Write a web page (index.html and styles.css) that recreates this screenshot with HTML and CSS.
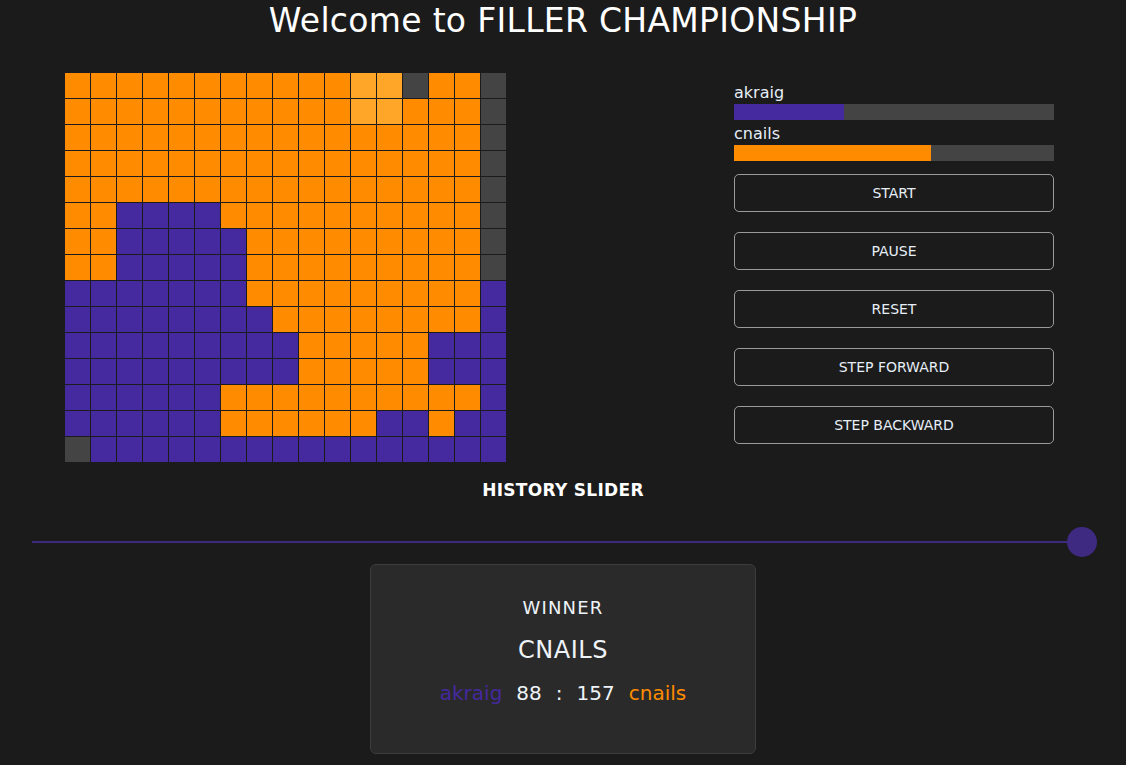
FILE: index.html
```html
<!DOCTYPE html>
<html lang="en">
<head>
<meta charset="utf-8">
<title>Filler Championship</title>
<link rel="stylesheet" href="styles.css">
</head>
<body>
<h1 class="title">Welcome to FILLER CHAMPIONSHIP</h1>
<main class="main">
  <div class="board" id="board"></div>
  <aside class="controls">
    <div class="player">
      <div class="player-name">akraig</div>
      <div class="bar"><div class="bar-fill fill-p1" style="width:34.5%"></div></div>
    </div>
    <div class="player">
      <div class="player-name">cnails</div>
      <div class="bar"><div class="bar-fill fill-p2" style="width:61.6%"></div></div>
    </div>
    <div class="buttons">
      <button class="btn">START</button>
      <button class="btn">PAUSE</button>
      <button class="btn">RESET</button>
      <button class="btn">STEP FORWARD</button>
      <button class="btn">STEP BACKWARD</button>
    </div>
  </aside>
</main>
<div class="history">HISTORY SLIDER</div>
<div class="slider-wrap">
  <input class="slider" type="range" min="0" max="100" value="100">
</div>
<section class="winner">
  <div class="winner-label">WINNER</div>
  <div class="winner-name">CNAILS</div>
  <div class="score">
    <span class="p1">akraig</span>
    <span>88</span>
    <span>:</span>
    <span>157</span>
    <span class="p2">cnails</span>
  </div>
</section>
<script>
  var rows = [
    "OOOOOOOOOOOLLGOOG",
    "OOOOOOOOOOOLLOOOG",
    "OOOOOOOOOOOOOOOOG",
    "OOOOOOOOOOOOOOOOG",
    "OOOOOOOOOOOOOOOOG",
    "OOPPPPOOOOOOOOOOG",
    "OOPPPPPOOOOOOOOOG",
    "OOPPPPPOOOOOOOOOG",
    "PPPPPPPOOOOOOOOOP",
    "PPPPPPPPOOOOOOOOP",
    "PPPPPPPPPOOOOOPPP",
    "PPPPPPPPPOOOOOPPP",
    "PPPPPPOOOOOOOOOOP",
    "PPPPPPOOOOOOPPOPP",
    "GPPPPPPPPPPPPPPPP"
  ];
  var map = {O: "c-o", L: "c-l", G: "c-g", P: "c-p"};
  var board = document.getElementById("board");
  rows.forEach(function (r) {
    for (var i = 0; i < r.length; i++) {
      var d = document.createElement("div");
      d.className = "cell " + map[r[i]];
      board.appendChild(d);
    }
  });
</script>
</body>
</html>
```

FILE: styles.css
```css
* { box-sizing: border-box; }

body {
  margin: 0;
  background: #1b1b1b;
  color: #eef3f8;
  font-family: "DejaVu Sans", "Open Sans", sans-serif;
}

.title {
  margin: 0;
  padding-top: 1px;
  text-align: center;
  font-size: 33px;
  font-weight: 400;
  letter-spacing: 0.3px;
  line-height: 40px;
  color: #ffffff;
}

.main {
  display: flex;
  justify-content: space-between;
  align-items: flex-start;
  padding: 32px 72px 0 65px;
}

.board {
  display: grid;
  grid-template-columns: repeat(17, 25px);
  grid-auto-rows: 25px;
  gap: 1px;
  background: #1b1b1b;
}

.cell.c-o { background: #ff8c00; }
.cell.c-l { background: #ffa629; }
.cell.c-g { background: #444444; }
.cell.c-p { background: #45299f; }

.controls {
  width: 320px;
  padding-top: 9px;
}

.player + .player { margin-top: 3px; }

.player-name {
  font-size: 16px;
  line-height: 22px;
  color: #e6eef7;
}

.bar {
  height: 16px;
  background: #444444;
}

.bar-fill { height: 100%; }
.fill-p1 { background: #45299f; }
.fill-p2 { background: #ff8c00; }

.buttons {
  display: flex;
  flex-direction: column;
  gap: 20px;
  margin-top: 13px;
}

.btn {
  height: 38px;
  background: transparent;
  border: 1px solid #9a9a9a;
  border-radius: 5px;
  color: #e6eef7;
  font-family: inherit;
  font-size: 14px;
}

.history {
  margin-top: 18px;
  text-align: center;
  font-size: 17px;
  font-weight: 700;
  letter-spacing: 0.3px;
  line-height: 20px;
  color: #ffffff;
}

.slider-wrap {
  display: flex;
  padding: 0 29px 0 32px;
  margin-top: 27px;
}

.slider {
  flex: 1;
  margin: 0;
  height: 30px;
  -webkit-appearance: none;
  appearance: none;
  background: transparent;
}

.slider::-webkit-slider-runnable-track {
  height: 2px;
  background: #3d2a80;
}

.slider::-webkit-slider-thumb {
  -webkit-appearance: none;
  appearance: none;
  width: 30px;
  height: 30px;
  border-radius: 50%;
  background: #3f2a82;
  margin-top: -14px;
  border: none;
}

.winner {
  width: 386px;
  height: 190px;
  margin: 7px auto 0;
  padding-top: 33px;
  background: #2a2a2a;
  border: 1px solid #3c3c3c;
  border-radius: 6px;
  text-align: center;
}

.winner-label {
  font-size: 18px;
  letter-spacing: 1.2px;
  line-height: 20px;
}

.winner-name {
  margin-top: 17px;
  font-size: 24px;
  letter-spacing: 0.5px;
  line-height: 30px;
}

.score {
  display: flex;
  justify-content: center;
  gap: 14px;
  margin-top: 15px;
  font-size: 20px;
  line-height: 26px;
}

.score .p1 { color: #45299f; }
.score .p2 { color: #ff8c00; }
```
